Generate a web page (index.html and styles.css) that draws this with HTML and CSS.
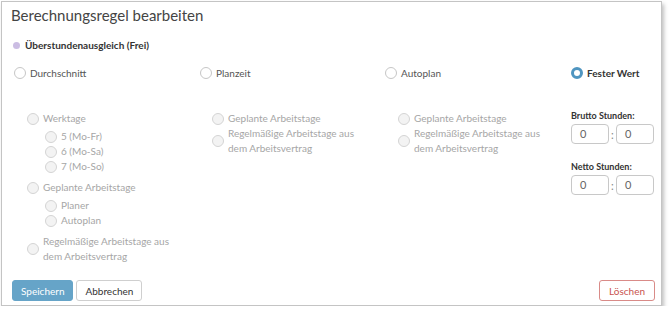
FILE: index.html
```
<!DOCTYPE html>
<html lang="de">
<head>
  <meta charset="UTF-8">
  <title>Berechnungsregel bearbeiten</title>
  <link rel="stylesheet" href="styles.css">
</head>
<body>
  <div class="dialog">
    <h2 class="title">Berechnungsregel bearbeiten</h2>

    <div class="rule-name"><span class="dot"></span>Überstundenausgleich (Frei)</div>

    <div class="modes">
      <label class="opt"><span class="radio"></span>Durchschnitt</label>
      <label class="opt"><span class="radio"></span>Planzeit</label>
      <label class="opt"><span class="radio"></span>Autoplan</label>
      <label class="opt active"><span class="radio checked"></span>Fester Wert</label>
    </div>

    <div class="details">
      <div class="col col-first">
        <div class="sub"><span class="radio"></span>Werktage</div>
        <div class="nested">
          <div class="sub"><span class="radio"></span>5 (Mo-Fr)</div>
          <div class="sub"><span class="radio"></span>6 (Mo-Sa)</div>
          <div class="sub"><span class="radio"></span>7 (Mo-So)</div>
        </div>
        <div class="sub gap"><span class="radio"></span>Geplante Arbeitstage</div>
        <div class="nested">
          <div class="sub"><span class="radio"></span>Planer</div>
          <div class="sub"><span class="radio"></span>Autoplan</div>
        </div>
        <div class="sub gap"><span class="radio"></span><span>Regelmäßige Arbeitstage aus<br>dem Arbeitsvertrag</span></div>
      </div>

      <div class="col">
        <div class="sub"><span class="radio"></span>Geplante Arbeitstage</div>
        <div class="sub"><span class="radio"></span><span>Regelmäßige Arbeitstage aus<br>dem Arbeitsvertrag</span></div>
      </div>

      <div class="col">
        <div class="sub"><span class="radio"></span>Geplante Arbeitstage</div>
        <div class="sub"><span class="radio"></span><span>Regelmäßige Arbeitstage aus<br>dem Arbeitsvertrag</span></div>
      </div>

      <div class="col col-hours">
        <div class="hours-label">Brutto Stunden:</div>
        <div class="time">
          <span class="field">0</span><span class="colon">:</span><span class="field">0</span>
        </div>
        <div class="hours-label second">Netto Stunden:</div>
        <div class="time">
          <span class="field">0</span><span class="colon">:</span><span class="field">0</span>
        </div>
      </div>
    </div>

    <div class="footer">
      <div class="left-buttons">
        <button class="btn btn-primary">Speichern</button>
        <button class="btn">Abbrechen</button>
      </div>
      <button class="btn btn-danger">Löschen</button>
    </div>
  </div>
</body>
</html>
```

FILE: styles.css
```
:root {
  --text: #444444;
  --muted: #a6a6a6;
  --border: #cccccc;
  --blue: #4f95c0;
  --danger: #c9534f;
}

body {
  margin: 0;
  background: #ffffff;
  font-family: Lato, 'Open Sans', sans-serif;
  font-size: 10px;
  color: var(--text);
}

.dialog {
  box-sizing: border-box;
  width: 661px;
  height: 305px;
  margin: 1px 0 0 1px;
  border: 1px solid #c4c4c4;
  box-shadow: 2px 3px 4px rgba(0, 0, 0, 0.25);
  padding: 2px 6px 4px 9px;
  display: flex;
  flex-direction: column;
}

.title {
  margin: 0;
  font-size: 15px;
  font-weight: 400;
  line-height: 22px;
  color: #444;
}

.rule-name {
  margin-top: 12px;
  display: flex;
  align-items: center;
  gap: 5px;
  font-weight: 700;
  color: #333;
  padding-left: 2px;
  line-height: 15px;
}

.dot {
  width: 7px;
  height: 7px;
  border-radius: 50%;
  background: #cbbde3;
}

.modes {
  margin-top: 12px;
  display: grid;
  grid-template-columns: 186px 185px 186px auto;
  padding-left: 3px;
}

.opt {
  display: flex;
  align-items: center;
  gap: 4px;
  line-height: 16px;
  color: #555;
}

.opt.active {
  font-weight: 700;
  color: #333;
}

.radio {
  box-sizing: border-box;
  flex: none;
  width: 12px;
  height: 12px;
  border-radius: 50%;
  border: 1px solid #c6c6c6;
  background: #fff;
}

.radio.checked {
  border: 3.5px solid var(--blue);
}

.details {
  margin-top: 30px;
  display: grid;
  grid-template-columns: 185px 186px 173px auto;
  padding-left: 16px;
  color: var(--muted);
}

.sub {
  display: flex;
  align-items: center;
  gap: 4px;
  line-height: 15px;
}

.sub .radio {
  border-color: #d4d4d4;
  background: #f3f3f3;
}

.nested {
  padding-left: 18px;
  margin-top: 3px;
}

.sub.gap {
  margin-top: 6px;
}

.col-hours {
  margin-top: -1px;
}

.hours-label {
  font-size: 9px;
  font-weight: 700;
  color: #333;
  line-height: 12px;
}

.hours-label.second {
  margin-top: 17px;
}

.time {
  margin-top: 2px;
  display: flex;
  align-items: center;
}

.field {
  box-sizing: border-box;
  width: 38px;
  height: 20px;
  border: 1px solid #c8c8c8;
  border-radius: 4px;
  padding-left: 8px;
  line-height: 18px;
  font-size: 11px;
  color: #666;
}

.colon {
  width: 7px;
  text-align: center;
  font-size: 11px;
  color: #888;
}

.footer {
  margin-top: auto;
  display: flex;
  justify-content: space-between;
  align-items: center;
}

.left-buttons {
  display: flex;
  gap: 3px;
  padding-left: 1px;
}

.btn {
  font-family: inherit;
  font-size: 10px;
  height: 21px;
  padding: 0 8px;
  border: 1px solid #cfcfcf;
  border-radius: 3px;
  background: #fff;
  color: #333;
}

.btn-primary {
  background: #66a4c8;
  border-color: #66a4c8;
  color: #fff;
}

.btn-danger {
  padding: 0 9px;
  border-color: #d98b88;
  color: var(--danger);
}
```
